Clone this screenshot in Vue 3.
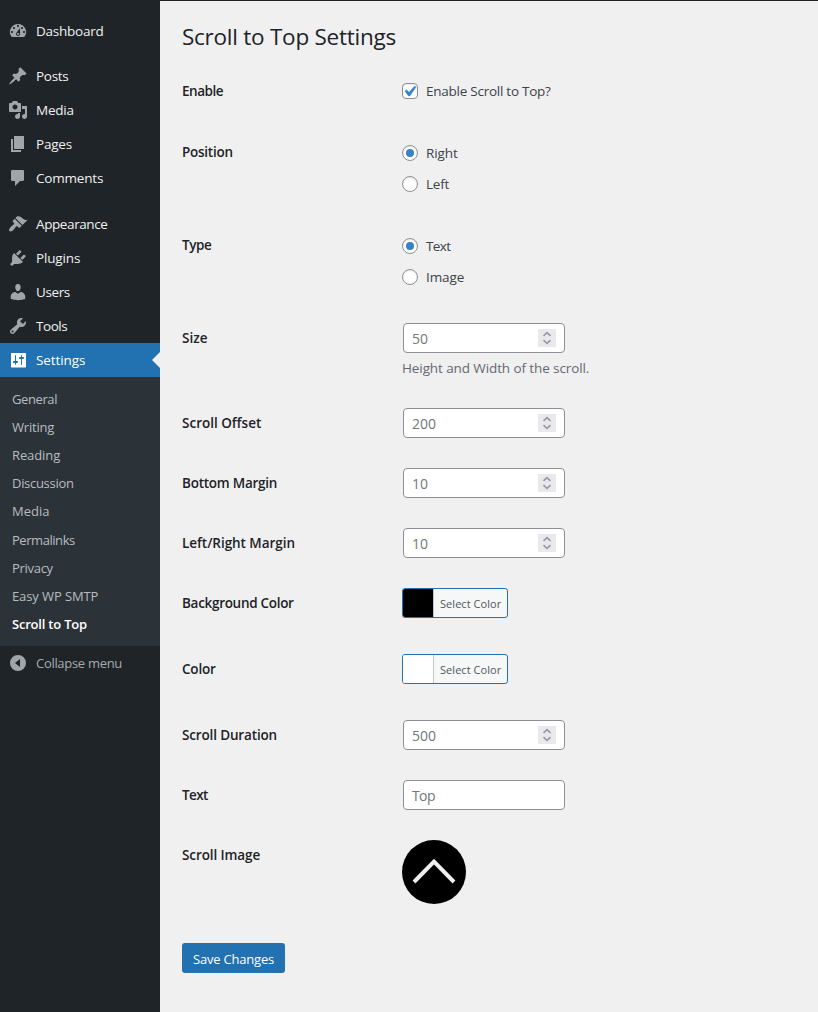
<script setup>
const icons = {
  dashboard: 'M3.76 16h12.48A7.998 7.998 0 0 0 10 3a7.998 7.998 0 0 0-6.24 13zM10 4c.55 0 1 .45 1 1s-.45 1-1 1-1-.45-1-1 .45-1 1-1zM6 6c.55 0 1 .45 1 1s-.45 1-1 1-1-.45-1-1 .45-1 1-1zm8 0c.55 0 1 .45 1 1s-.45 1-1 1-1-.45-1-1 .45-1 1-1zm-5.37 5.55L12 7v6c0 1.1-.9 2-2 2s-2-.9-2-2c0-.57.24-1.08.63-1.45zM4 10c.55 0 1 .45 1 1s-.45 1-1 1-1-.45-1-1 .45-1 1-1zm12 0c.55 0 1 .45 1 1s-.45 1-1 1-1-.45-1-1 .45-1 1-1zm-5 3c0-.55-.45-1-1-1s-1 .45-1 1 .45 1 1 1 1-.45 1-1z',
  post: 'M10.44 3.02l1.82-1.82 6.36 6.35-1.83 1.82c-1.05-.68-2.48-.57-3.41.36l-.75.75c-.92.93-1.04 2.35-.35 3.41l-1.83 1.82-2.41-2.41-2.8 2.79c-.42.42-3.38 2.71-3.8 2.29s1.86-3.39 2.28-3.81l2.79-2.79L4.1 9.36l1.83-1.82c1.05.69 2.48.57 3.4-.36l.75-.75c.93-.92 1.05-2.35.36-3.41z',
  media: 'M13 11V4c0-.55-.45-1-1-1h-1.67L9 1H5L3.67 3H2c-.55 0-1 .45-1 1v7c0 .55.45 1 1 1h10c.55 0 1-.45 1-1zM7 4.5c1.38 0 2.5 1.12 2.5 2.5S8.38 9.5 7 9.5 4.5 8.38 4.5 7 5.62 4.5 7 4.5zM14 6h5v10.5c0 1.38-1.12 2.5-2.5 2.5S14 17.88 14 16.5s1.12-2.5 2.5-2.5c.17 0 .34.02.5.05V9h-3V6zm-4 8.05V13h2v3.5c0 1.38-1.12 2.5-2.5 2.5S7 17.88 7 16.5 8.12 14 9.5 14c.17 0 .34.02.5.05z',
  page: 'M6 15V2h10v13H6zm-1 1h8v2H3V5h2v11z',
  comment: 'M4.2 2h10.6c.7 0 1.2.5 1.2 1.200v8.600c0 .7-.5 1.200-1.200 1.200H12l-5 5v-5H4.200c-.7 0-1.200-.5-1.200-1.200V3.200c0-.7.5-1.200 1.200-1.200z',
  brush: 'M14.48 11.06L7.41 3.99l1.5-1.5c.5-.56 2.3-.47 3.51.32 1.21.8 1.43 1.28 2.91 2.1 1.18.64 2.45 1.26 4.45.85zm-.71.71L6.7 4.7 4.93 6.47c-.39.39-.39 1.02 0 1.41l1.06 1.06c.39.39.39 1.03 0 1.42-.6.6-1.43 1.11-2.21 1.69-.35.26-.7.53-1.01.84C1.43 14.23.4 16.08 1.4 17.07c.99 1 2.84-.03 4.18-1.36.31-.31.58-.66.85-1.02.57-.78 1.08-1.61 1.69-2.21.39-.39 1.02-.39 1.41 0l1.06 1.06c.39.39 1.02.39 1.41 0z',
  plugin: 'M13.11 4.36L9.87 7.6 8 5.73l3.24-3.24c.35-.34 1.05-.2 1.56.32.52.51.66 1.21.31 1.55zm-8 1.77l.91-1.12 9.01 9.01-1.19.84c-.71.71-2.63 1.16-3.82 1.16H6.14L4.9 17.26c-.59.59-1.54.59-2.12 0-.59-.58-.59-1.53 0-2.12l1.24-1.24v-3.88c0-1.13.4-3.19 1.09-3.89zm7.26 3.97l3.24-3.24c.34-.35 1.04-.21 1.55.31.52.51.66 1.21.31 1.55l-3.24 3.25z',
  user: 'M10 9.25c-2.27 0-2.73-3.44-2.73-3.44C7 4.02 7.82 2 9.97 2c2.16 0 2.98 2.02 2.71 3.81 0 0-.41 3.44-2.68 3.44zm0 2.57L12.72 10c2.39 0 4.52 2.33 4.52 4.53v2.49s-3.65 1.13-7.24 1.13c-3.65 0-7.24-1.13-7.24-1.13v-2.49c0-2.25 1.94-4.48 4.47-4.48z',
  tool: 'M16.68 9.77c-1.34 1.34-3.3 1.67-4.95.99l-5.41 6.52c-.99.99-2.59.99-3.58 0s-.99-2.59 0-3.57l6.52-5.42c-.68-1.65-.35-3.61.99-4.95 1.28-1.28 3.12-1.62 4.72-1.06l-2.89 2.89 2.82 2.82 2.86-2.87c.53 1.58.18 3.39-1.08 4.65zM3.81 16.21c.4.39 1.04.39 1.43 0 .4-.4.4-1.04 0-1.43-.39-.4-1.03-.4-1.43 0-.39.39-.39 1.03 0 1.43z',
  settings: 'M18 17V3.500c0-.3-.2-.5-.5-.5h-14c-.3 0-.5.2-.5.5V17c0 .3.2.5.5.5h14c.3 0 .5-.2.5-.5zM8 11h1c.55 0 1 .45 1 1s-.45 1-1 1H8v1.5c0 .28-.22.5-.5.5s-.5-.22-.5-.5V13H6c-.55 0-1-.45-1-1s.45-1 1-1h1V5.500c0-.28.22-.5.5-.5s.5.22.5.5V11zm5-2h-1c-.55 0-1-.45-1-1s.45-1 1-1h1V5.500c0-.28.22-.5.5-.5s.5.22.5.5V7h1c.55 0 1 .45 1 1s-.45 1-1 1h-1v5.500c0 .28-.22.5-.5.5s-.5-.22-.5-.5V9z',
  collapse: 'M10 2a8 8 0 1 0 0 16 8 8 0 0 0 0-16zM12 6v8l-5-4z',
}
// ls: tracking class suffix, in hundredths of a pixel (negative)
const menu = [
  [{ t: 'Dashboard', i: 'dashboard', ls: 25 }],
  [{ t: 'Posts', i: 'post', ls: 30 }, { t: 'Media', i: 'media', ls: 25 }, { t: 'Pages', i: 'page', ls: 20 }, { t: 'Comments', i: 'comment', ls: 20 }],
  [{ t: 'Appearance', i: 'brush', ls: 40 }, { t: 'Plugins', i: 'plugin', ls: 15 }, { t: 'Users', i: 'user', ls: 40 }, { t: 'Tools', i: 'tool', ls: 45 }, { t: 'Settings', i: 'settings', ls: 10, on: true }],
]
const submenu = [
  { t: 'General', ls: 40 }, { t: 'Writing', ls: 20 }, { t: 'Reading', ls: 10 }, { t: 'Discussion', ls: 30 },
  { t: 'Media', ls: 0 }, { t: 'Permalinks', ls: 45 }, { t: 'Privacy', ls: 30 }, { t: 'Easy WP SMTP', ls: 10 },
  { t: 'Scroll to Top', ls: 20, cur: true },
]
const rows = [
  { label: 'Enable', ls: 45, kind: 'check', cls: 'h61', options: [{ t: 'Enable Scroll to Top?', ls: 25 }] },
  { label: 'Position', ls: 25, kind: 'radio', cls: 'h93', options: [{ t: 'Right', ls: 10 }, { t: 'Left', ls: 20 }] },
  { label: 'Type', ls: 45, kind: 'radio', cls: 'h93', options: [{ t: 'Text', ls: 60 }, { t: 'Image', ls: 10 }] },
  { label: 'Size', ls: 0, kind: 'number', cls: 'h85', value: '50', help: 'Height and Width of the scroll.' },
  { label: 'Scroll Offset', ls: 0, kind: 'number', value: '200' },
  { label: 'Bottom Margin', ls: 25, kind: 'number', value: '10' },
  { label: 'Left/Right Margin', ls: 5, kind: 'number', value: '10' },
  { label: 'Background Color', ls: 30, kind: 'color', cls: 'h66', value: '#000000' },
  { label: 'Color', ls: 20, kind: 'color', cls: 'h66', value: '#ffffff' },
  { label: 'Scroll Duration', ls: 15, kind: 'number', value: '500' },
  { label: 'Text', ls: 60, kind: 'text', value: 'Top' },
  { label: 'Scroll Image', ls: 10, kind: 'image', cls: 'h117' },
]
</script>

<template>
  <div class="page">
    <div class="topbar"></div>
    <nav class="side">
      <ul v-for="(group, g) in menu" :key="g" class="group">
        <li v-for="m in group" :key="m.t" class="item" :class="{ on: m.on }">
          <svg class="ico" viewBox="0 0 20 20"><path :d="icons[m.i]" fill-rule="evenodd" /></svg>
          <span :class="'ls' + m.ls">{{ m.t }}</span>
        </li>
      </ul>
      <ul class="sub">
        <li v-for="s in submenu" :key="s.t" :class="{ cur: s.cur }"><span :class="'ls' + s.ls">{{ s.t }}</span></li>
      </ul>
      <div class="item collapse">
        <svg class="ico" viewBox="0 0 20 20"><path :d="icons.collapse" fill-rule="evenodd" /></svg>
        <span class="ls30">Collapse menu</span>
      </div>
    </nav>
    <main class="main">
      <h1 class="ls25">Scroll to Top Settings</h1>
      <section v-for="r in rows" :key="r.label" class="row" :class="r.cls">
        <div class="label"><span :class="'ls' + r.ls">{{ r.label }}</span></div>
        <div class="field">
          <template v-if="r.options">
            <label v-for="(o, n) in r.options" :key="o.t" class="opt">
              <span class="box" :class="r.kind">
                <svg v-if="r.kind === 'check'" viewBox="0 0 20 20"><path d="M14.83 4.89l1.34.94-5.81 8.38H9.020L5.780 9.670l1.340-1.250 2.570 2.400z" /></svg>
                <i v-else-if="n === 0"></i>
              </span>
              <span :class="'ls' + o.ls">{{ o.t }}</span>
            </label>
          </template>
          <template v-else-if="r.kind === 'number' || r.kind === 'text'">
            <div class="input">
              <span :class="{ ls60: r.kind === 'text' }">{{ r.value }}</span>
              <svg v-if="r.kind === 'number'" class="spin" viewBox="0 0 18 18"><path d="M5.500 6.800L9 3.600l3.500 3.200M5.500 11.200l3.500 3.200 3.500-3.200" /></svg>
            </div>
            <p v-if="r.help" class="ls10">{{ r.help }}</p>
          </template>
          <div v-else-if="r.kind === 'color'" class="color">
            <i :style="{ background: r.value }"></i><span>Select Color</span>
          </div>
          <svg v-else class="arrow" viewBox="0 0 64 64"><circle cx="32" cy="32" r="32" /><path d="M12 42L32 21.500 52 42" /></svg>
        </div>
      </section>
      <button class="save ls20">Save Changes</button>
    </main>
  </div>
</template>

<style>
html, body { margin: 0; background: #f0f0f0; }
</style>
<style scoped>
* { box-sizing: border-box; }
.page {
  display: grid; grid-template: 1px 1011px / 160px 658px;
  width: 818px; height: 1012px; overflow: hidden; background: #f0f0f0;
  font: 13.5px/18px "Open Sans", "Noto Sans", sans-serif; color: #3c434a;
}
.topbar { grid-column: 1 / 3; background: #1d2327; }
ul { list-style: none; margin: 0; padding: 0; }
.ls0 { letter-spacing: 0; }
.ls5 { letter-spacing: -0.05px; }
.ls10 { letter-spacing: -0.1px; }
.ls15 { letter-spacing: -0.15px; }
.ls20 { letter-spacing: -0.2px; }
.ls25 { letter-spacing: -0.25px; }
.ls30 { letter-spacing: -0.3px; }
.ls40 { letter-spacing: -0.4px; }
.ls45 { letter-spacing: -0.45px; }
.ls60 { letter-spacing: -0.6px; }
.side { background: #1f2428; padding-top: 13px; color: #f0f0f1; }
.group { margin-bottom: 11px; }
.group:nth-child(2) { margin-bottom: 12px; }
.group:nth-child(3) { margin-bottom: 0; }
.item { height: 34px; display: flex; align-items: center; padding-left: 8px; gap: 8px; position: relative; white-space: nowrap; }
.ico { width: 20px; height: 20px; fill: #a0a5aa; flex: none; }
.item.on { background: #2271b1; color: #fff; }
.item.on .ico { fill: #fff; }
.item.on::after { content: ""; position: absolute; right: 0; top: 9px; border: 8px solid transparent; border-left: 0; border-right-color: #f0f0f0; }
.sub { background: #2c3338; height: 269px; padding: 7.9px 12px 0; font-size: 13px; line-height: 28.140px; color: #b8bcc0; }
.sub .cur { color: #fff; font-weight: 600; }
.collapse { color: #a7aaad; font-size: 13px; }
.main { padding: 20px 22px 0; display: flex; flex-direction: column; align-items: flex-start; }
h1 { margin: 0; height: 41px; font-size: 22.5px; line-height: 32px; font-weight: 400; color: #1d2327; }
.row { display: grid; grid-template-columns: 220px 1fr; width: 100%; height: 60px; }
.h61 { height: 61px; }
.h93 { height: 93px; }
.h85 { height: 85px; }
.h66 { height: 66px; }
.h117 { height: 117px; }
.label { padding-top: 20px; font-weight: 600; color: #1d2327; }
.field { padding-top: 14px; }
.opt { display: flex; align-items: center; gap: 8px; height: 31px; }
.h61 .opt { height: 30px; }
.box { width: 16px; height: 16px; border: 1px solid #8c8f94; background: #fff; box-shadow: inset 0 1px 2px rgba(0,0,0,.1); display: flex; align-items: center; justify-content: center; }
.check { border-radius: 4px; }
.check svg { width: 21px; height: 21px; flex: none; margin-left: -1px; fill: #3582c4; stroke: #3582c4; stroke-width: .5; }
.radio { border-radius: 50%; }
.radio i { width: 8px; height: 8px; border-radius: 50%; background: #3582c4; }
.input { width: 162px; height: 30px; margin-left: 1px; border: 1px solid #8c8f94; border-radius: 4px; background: #fff; padding: 1px 8px 0; display: flex; justify-content: space-between; align-items: center; font-size: 14px; color: #72777c; }
.spin { width: 18px; height: 18px; background: #e9e9ed; fill: none; stroke: #9a9aa5; stroke-width: 1.8; margin-top: -1px; }
p { margin: 6px 0 0; color: #646970; }
.color { width: 106px; height: 30px; border: 1px solid #2271b1; border-radius: 3px; display: flex; overflow: hidden; background: #f6f7f7; font-size: 11px; line-height: 30px; letter-spacing: 0.05px; color: #50575e; }
.color i { width: 31px; border-right: 1px solid #c3c4c7; margin-right: 6px; }
.arrow { width: 64px; height: 64px; display: block; }
.arrow path { fill: none; stroke: #f0f0f0; stroke-width: 4; }
.save { width: 103px; height: 30px; border: 0; border-radius: 3px; background: #2271b1; color: #fff; font: 13px/32px "Open Sans", "Noto Sans", sans-serif; padding: 0; white-space: nowrap; }
</style>
